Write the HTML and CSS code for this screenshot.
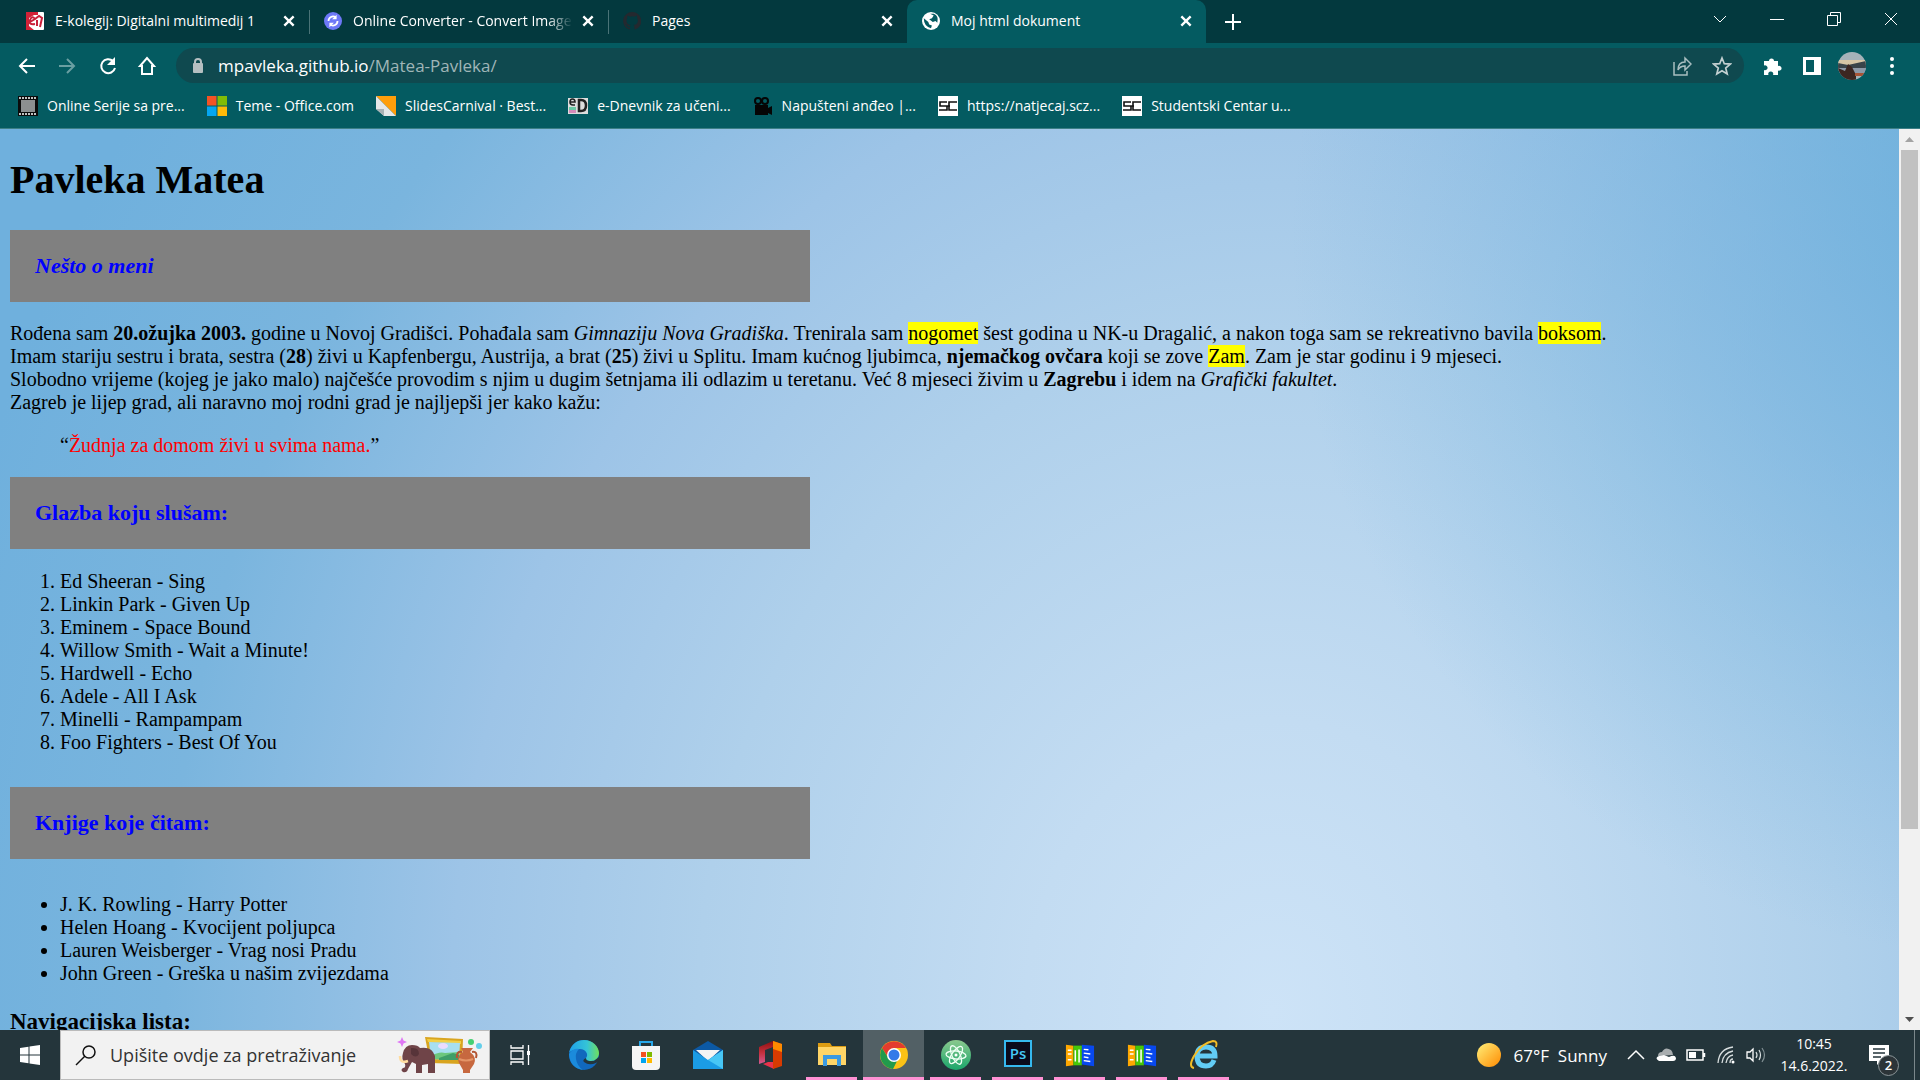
FILE: index.html
```html
<!DOCTYPE html>
<html lang="hr">
<head>
<meta charset="utf-8">
<title>Moj html dokument</title>
<link rel="stylesheet" href="styles.css">
</head>
<body>
<svg class="defs" aria-hidden="true">
  <symbol id="close" viewBox="0 0 12 12"><path d="M2 2l8 8M10 2l-8 8" stroke="#fff" stroke-width="2"/></symbol>
  <symbol id="sc" viewBox="0 0 20 20"><path fill="#fff" d="M0 0h20v20H0z"/><path d="M9 6H2v4h7v4H1M19 6h-8v8h8M9 10h3" fill="none" stroke="#111" stroke-width="1.600"/></symbol>
  <symbol id="lib" viewBox="0 0 30 32"><path fill="#ffa800" d="M0 5l8 1v21l-8 1z"/><path fill="#46c808" d="M8 6l9 0v21l-9 0z"/><path fill="#0848ee" d="M17 5l13 1v22l-13-2z"/><path d="M2 11h4M2 15h4M2 21h4M10 11v12M14 10v14M19 10l5 .5M19 14l7 1M19 18l5 1M19 22l7 1" stroke="#fff" stroke-width="1.600"/></symbol>
</svg>

<header class="browser">
  <nav class="tabs" aria-label="Kartice">
    <div class="tab first">
      <svg class="fav" viewBox="0 0 18 18"><rect width="18" height="18" rx="1" fill="#fff"/><path d="M0 0h12v3H8L3 6v8l5 4H0z" fill="#d32238"/><path d="M4 10l5-3q-3-4-5 1t5 4M9 7l4-3 3 2-2 9M11 8v6" fill="none" stroke="#c9203a" stroke-width="2"/></svg>
      <a href="#">E-kolegij: Digitalni multimedij 1</a>
      <button aria-label="Zatvori"><svg><use href="#close"/></svg></button>
    </div>
    <div class="tab">
      <svg class="fav" viewBox="0 0 20 20"><circle cx="10" cy="10" r="10" fill="#6d78f7"/><path d="M5 10a5 5 0 0 1 8-4M15 10a5 5 0 0 1-8 4" fill="none" stroke="#fff" stroke-width="2"/><path d="M14 3v5H9zM6 17v-5h5z" fill="#fff"/></svg>
      <a class="fade" href="#">Online Converter - Convert Image</a>
      <button aria-label="Zatvori"><svg><use href="#close"/></svg></button>
    </div>
    <div class="tab">
      <svg class="fav" viewBox="0 0 20 20"><path fill="#24292f" d="M10 0a10 10 0 0 0-3 19.500c.5.100.7-.2.700-.5v-1.800c-2.700.6-3.300-1.200-3.300-1.200-.5-1.200-1.100-1.500-1.100-1.500-.9-.6.100-.6.100-.6 1 .1 1.500 1 1.500 1 .9 1.600 2.400 1.100 2.900.9.100-.7.400-1.100.6-1.400-2.200-.2-4.500-1.100-4.500-4.900 0-1.100.4-2 1-2.700-.1-.2-.4-1.300.1-2.600 0 0 .8-.3 2.700 1a9 9 0 0 1 5 0c1.900-1.300 2.700-1 2.700-1 .5 1.300.2 2.400.1 2.600.6.700 1 1.600 1 2.700 0 3.800-2.300 4.700-4.500 4.900.4.300.7.900.7 1.900V19c0 .3.200.6.700.5A10 10 0 0 0 10 0"/></svg>
      <a href="#">Pages</a>
      <button aria-label="Zatvori"><svg><use href="#close"/></svg></button>
    </div>
    <div class="tab active">
      <svg class="fav" viewBox="0 0 20 20"><circle cx="10" cy="10" r="10" fill="#fff"/><path d="M2 7l5 4 1 3 3 1-1 3q-8-2-8-11M9 2l4 2-2 3-3 1 4 3 3-1 2 2q2-8-4-10z" fill="#045b61"/></svg>
      <a href="#">Moj html dokument</a>
      <button aria-label="Zatvori"><svg><use href="#close"/></svg></button>
    </div>
    <button class="newtab" aria-label="Nova kartica"><svg viewBox="0 0 16 16"><path d="M8 0v16M0 8h16" stroke="#fff" stroke-width="2"/></svg></button>
    <div class="winctl">
      <button aria-label="Pretraži kartice"><svg viewBox="0 0 14 14"><path d="M1 4l6 6 6-6"/></svg></button>
      <button aria-label="Minimiziraj"><svg viewBox="0 0 14 14"><path d="M0 7.500h14"/></svg></button>
      <button aria-label="Vrati"><svg viewBox="0 0 14 14"><path d="M.5 3.500h10v10H.5zM3.500 3V.5h10v10H11"/></svg></button>
      <button aria-label="Zatvori prozor"><svg viewBox="0 0 14 14"><path d="M1 1l12 12M13 1L1 13"/></svg></button>
    </div>
  </nav>

  <div class="toolbar">
    <button aria-label="Natrag"><svg viewBox="0 0 20 20"><path d="M18 10H3M10 3l-7 7 7 7" fill="none" stroke="#fff" stroke-width="2"/></svg></button>
    <button aria-label="Naprijed"><svg viewBox="0 0 20 20"><path d="M2 10h15M10 3l7 7-7 7" fill="none" stroke="#6a9fa2" stroke-width="2"/></svg></button>
    <button aria-label="Osvježi"><svg viewBox="0 0 20 20"><path d="M16 5a7 7 0 1 0 2 7" fill="none" stroke="#fff" stroke-width="2"/><path d="M18 1v8h-8z" fill="#fff"/></svg></button>
    <button aria-label="Početna"><svg viewBox="0 0 20 20"><path d="M5 18V10H3l7-8 7 8h-2v8z" fill="none" stroke="#fff" stroke-width="2"/></svg></button>
    <div class="omnibox">
      <svg class="lock" viewBox="0 0 12 16"><rect x="1" y="5" width="10" height="10" rx="1" fill="#b5bfc1"/><path d="M3 6V4a3 3 0 0 1 6 0v2" fill="none" stroke="#b5bfc1" stroke-width="2"/></svg>
      <a class="url" href="#">mpavleka.github.io<span>/Matea-Pavleka/</span></a>
      <button aria-label="Dijeli"><svg viewBox="0 0 20 20"><path d="M2 6v13h13v-4M6 14q0-8 7-8V2l6 6-6 6v-4q-5 0-7 4z" fill="none" stroke="#a9bec0" stroke-width="1.500"/></svg></button>
      <button aria-label="Oznaka"><svg viewBox="0 0 20 20"><path d="M10 2l2.300 5.700 6 .4-4.600 3.900 1.500 6L10 14.800 4.800 18l1.500-6-4.600-3.900 6-.4z" fill="none" stroke="#c3d0d1" stroke-width="1.700"/></svg></button>
    </div>
    <button aria-label="Proširenja"><svg viewBox="0 0 20 20"><path d="M2 5h5a2.500 2.500 0 1 1 5 0h4v5a2.500 2.500 0 1 1 0 4.500V19h-5a2.500 2.500 0 1 0-4.500 0H2v-5a2.500 2.500 0 1 0 0-4.500z" fill="#fff"/></svg></button>
    <button aria-label="Bočna ploča"><svg viewBox="0 0 20 20"><path d="M1 1h18v18H1z" fill="#fff"/><path d="M4 4h8v12H4z" fill="#045b61"/></svg></button>
    <button class="avatar" aria-label="Profil"><svg viewBox="0 0 28 28"><defs><clipPath id="av"><circle cx="14" cy="14" r="14"/></clipPath></defs><g clip-path="url(#av)"><path fill="#a5b2b9" d="M0 0h28v28H0z"/><path fill="#d6c6a6" d="M0 8h28v5H0z"/><path fill="#39444a" d="M0 11l10 2 18-4v7H0z"/><path fill="#8d99a8" d="M0 16h28v6H0z"/><path fill="#3c2621" d="M0 16l7 3 3-7 4 3 4 8v5H0z"/><path fill="#a85335" d="M17 21h11v3H17z"/></g></svg></button>
    <button aria-label="Izbornik"><svg viewBox="0 0 20 20" fill="#fff"><circle cx="10" cy="3" r="2"/><circle cx="10" cy="10" r="2"/><circle cx="10" cy="17" r="2"/></svg></button>
  </div>

  <nav class="bookmarks" aria-label="Oznake">
    <a href="#"><svg viewBox="0 0 20 20"><path fill="#0b0b0b" d="M0 0h20v20H0z"/><path fill="#8c8f90" d="M3 4h14v12H3z"/><path d="M1 2h18M1 18h18" stroke="#fff" stroke-width="1.500" stroke-dasharray="2 1"/></svg>Online Serije sa pre...</a>
    <a href="#"><svg viewBox="0 0 20 20"><path fill="#f35325" d="M0 0h9.500v9.500H0z"/><path fill="#81bc06" d="M10.500 0H20v9.500h-9.500z"/><path fill="#05a6f0" d="M0 10.500h9.500V20H0z"/><path fill="#ffba08" d="M10.500 10.500H20V20h-9.500z"/></svg>Teme - Office.com</a>
    <a href="#"><svg viewBox="0 0 20 20"><path fill="#ff9e0b" d="M0 0h20v20z"/><path fill="#e5e7e8" d="M0 0l20 20H8L0 13z"/><path fill="#a9b2b5" d="M8 20v-7H0z"/></svg>SlidesCarnival · Best...</a>
    <a href="#"><svg viewBox="0 0 20 20"><path fill="#ddd" d="M0 2h20v16H0z"/><path d="M2 6h5q0-3-2.500-3T2 6t3 3h2" fill="none" stroke="#222" stroke-width="1.600"/><path fill="#69c9a5" d="M1 11h7v3H1z"/><path fill="#d58ab9" d="M1 14h7v3H1z"/><path d="M11 4v11h2q5 0 5-5.500T13 4z" fill="none" stroke="#222" stroke-width="2.500"/></svg>e-Dnevnik za učeni...</a>
    <a href="#"><svg viewBox="0 0 20 20"><g fill="none" stroke="#050505" stroke-width="2"><circle cx="5" cy="5" r="3"/><circle cx="12" cy="5" r="3"/></g><path d="M2 9h13v3l4-2v9l-4-2v2H2z" fill="#050505"/></svg>Napušteni anđeo |...</a>
    <a href="#"><svg><use href="#sc"/></svg>https://natjecaj.scz...</a>
    <a href="#"><svg><use href="#sc"/></svg>Studentski Centar u...</a>
  </nav>
</header>

<div class="view">
  <main class="page">
    <h1>Pavleka Matea</h1>
    <h2 class="box"><em>Nešto o meni</em></h2>
    <p>Rođena sam <b>20.ožujka 2003.</b> godine u Novoj Gradišci. Pohađala sam <i>Gimnaziju Nova Gradiška</i>. Trenirala sam <mark>nogomet</mark> šest godina u NK-u Dragalić, a nakon toga sam se rekreativno bavila <mark>boksom</mark>.<br>
    Imam stariju sestru i brata, sestra (<b>28</b>) živi u Kapfenbergu, Austrija, a brat (<b>25</b>) živi u Splitu. Imam kućnog ljubimca, <b>njemačkog ovčara</b> koji se zove <mark>Zam</mark>. Zam je star godinu i 9 mjeseci.<br>
    Slobodno vrijeme (kojeg je jako malo) najčešće provodim s njim u dugim šetnjama ili odlazim u teretanu. Već 8 mjeseci živim u <b>Zagrebu</b> i idem na <i>Grafički fakultet</i>.<br>
    Zagreb je lijep grad, ali naravno moj rodni grad je najljepši jer kako kažu:</p>
    <blockquote>“<span>Žudnja za domom živi u svima nama.</span>”</blockquote>
    <h2 class="box">Glazba koju slušam:</h2>
    <ol>
      <li>Ed Sheeran - Sing</li>
      <li>Linkin Park - Given Up</li>
      <li>Eminem - Space Bound</li>
      <li>Willow Smith - Wait a Minute!</li>
      <li>Hardwell - Echo</li>
      <li>Adele - All I Ask</li>
      <li>Minelli - Rampampam</li>
      <li>Foo Fighters - Best Of You</li>
    </ol>
    <h2 class="box books">Knjige koje čitam:</h2>
    <ul>
      <li>J. K. Rowling - Harry Potter</li>
      <li>Helen Hoang - Kvocijent poljupca</li>
      <li>Lauren Weisberger - Vrag nosi Pradu</li>
      <li>John Green - Greška u našim zvijezdama</li>
    </ul>
    <h3>Navigacijska lista:</h3>
  </main>
  <div class="scroll">
    <svg viewBox="0 0 21 21"><path d="M6 13h9l-4.500-5z" fill="#a3a3a3"/></svg>
    <div class="track"><div class="thumb"></div></div>
    <svg viewBox="0 0 21 21"><path d="M6 8h9l-4.500 5z" fill="#505050"/></svg>
  </div>
</div>

<footer class="taskbar">
  <button class="start" aria-label="Start"><svg viewBox="0 0 20 20"><path fill="#fff" d="M0 3l8.500-1.200v7.700H0zM9.500 1.600L20 0v9.500H9.500zM0 10.500h8.500v7.700L0 17zM9.500 10.500H20V20L9.500 18.400z"/></svg></button>
  <label class="search">
    <svg class="glass" viewBox="0 0 22 22"><circle cx="14" cy="8" r="6" fill="none" stroke="#111" stroke-width="1.500"/><path d="M10 12l-9 9" stroke="#111" stroke-width="1.500"/></svg>
    <input type="text" placeholder="Upišite ovdje za pretraživanje" aria-label="Pretraživanje">
    <svg class="art" viewBox="0 0 86 38"><path fill="#d9a520" d="M28 1l38 2-1 25-32-1z"/><path fill="#f2cf45" d="M30 3l34 2v3L31 6z"/><path fill="#a7dff0" d="M32 6l31 1-1 17-28-1z"/><path fill="#6cc77d" d="M33 20q10-5 15-3l14-1v8l-28-1z"/><path fill="#3f9e68" d="M42 22l14-5 6 2v5H42z"/><ellipse cx="46" cy="10" rx="5" ry="3" fill="#eadcff"/><path d="M5 1l1.500 3.500L10 6 6.500 7.500 5 11 3.500 7.500 0 6l3.500-1.500z" fill="#df78f5"/><circle cx="74" cy="6" r="3" fill="#45cf72"/><circle cx="82" cy="10" r="3" fill="#64cfea"/><path fill="#6f4448" d="M6 17q2-8 9-8 6 0 8 3 12-2 15 8v17h-7v-9l-6 1v8h-6v-9l-4-2-4 7q-1 4-5 3-3-2 0-4 3 0 2-4-4-5-2-11"/><path d="M14 12q8-1 8 6-3 5-8 0" fill="#573439"/><path d="M3 20q0 8 8 5" fill="none" stroke="#ffdc9e" stroke-width="2.500"/><path fill="#c7683f" d="M64 12h12l-3 4q7 5 4 12l-4 6v3h-7v-3l-4-7q-3-7 4-11z"/><path d="M65 16q-6-1-5 6M75 16q6-1 4 6" fill="none" stroke="#b35634" stroke-width="2"/><path d="M62 23q7 3 14 0" fill="none" stroke="#e49467" stroke-width="2"/></svg>
  </label>
  <button class="taskview" aria-label="Prikaz zadataka"><svg viewBox="0 0 20 20"><path d="M1 0v3h12V0M1 20v-3h12v3M1 6h12v8H1zM18.500 0v20" fill="none" stroke="#fff" stroke-width="1.300"/><path fill="#fff" d="M17 6h3v4h-3z"/></svg></button>
  <nav class="apps" aria-label="Programi">
    <button aria-label="Edge"><svg viewBox="0 0 30 30"><defs><linearGradient id="eg"><stop stop-color="#1e9fe8"/><stop offset=".6" stop-color="#35c4d7"/><stop offset="1" stop-color="#70e05c"/></linearGradient></defs><circle cx="15" cy="15" r="15" fill="#1168bd"/><path fill="url(#eg)" d="M0 13C2 4 8 0 15 0c9 0 15 7 15 13 0 5-4 8-8 8-5 0-6-2-5-3 3-3 0-9-6-9C6 9 1 11 0 13"/><path fill="#1b8bdc" d="M0 14q4-6 10-5-4 4-3 10 1 7 7 11Q1 28 0 14"/><path fill="#24353b" d="M17 18q-4 2-2 4 5 4 12 1l3-2v-4l-5 4-4 0q-4 0-4-3"/></svg></button>
    <button aria-label="Store"><svg viewBox="0 0 30 30"><path d="M9 8V2h12v6" fill="none" stroke="#28a8ea" stroke-width="2"/><path d="M1 6h28v20q0 4-4 4H5q-4 0-4-4z" fill="#f5f5f5"/><path fill="#f25022" d="M10 12h5v5h-5z"/><path fill="#7fba00" d="M16 12h5v5h-5z"/><path fill="#00a4ef" d="M10 18h5v5h-5z"/><path fill="#ffb900" d="M16 18h5v5h-5z"/></svg></button>
    <button aria-label="Mail"><svg viewBox="0 0 30 30"><path fill="#0c59a4" d="M0 10L15 1l15 9v10H0z"/><path fill="#f4f4f4" d="M3 10h24L15 21z"/><path fill="#1b9ce5" d="M0 10l15 10 15-10v19H0z"/><path fill="#47c6f5" d="M30 10v19L15 20z"/></svg></button>
    <button aria-label="Office"><svg viewBox="0 0 30 30"><defs><linearGradient id="of" x2="0" y2="1"><stop stop-color="#8e1010"/><stop offset=".5" stop-color="#c4303d"/><stop offset="1" stop-color="#d45a92"/></linearGradient></defs><path fill="url(#of)" d="M4 7L18 1v6l-8 3v12l-6 2z"/><path fill="#e8324b" d="M8 24l5-2h6v7z"/><path fill="#d83b01" d="M18 1l9 3v22l-9 3z"/><path fill="#ff8a00" d="M18 1l9 3v8l-9-3z"/></svg></button>
    <button class="open" aria-label="Explorer"><svg viewBox="0 0 30 30"><path fill="#dc9c13" d="M1 3h12l2 3h14v4H1z"/><path fill="#ffd567" d="M1 7h28v18H1z"/><path fill="#3b9ae1" d="M6 15h18v11h-4v-7h-10v7H6z"/></svg></button>
    <button class="open current" aria-label="Chrome"><svg viewBox="0 0 30 30"><circle cx="15" cy="15" r="14" fill="#fbc116"/><path fill="#e33b2e" d="M3 8a14 14 0 0 1 24 0H15l-6 9z"/><path fill="#229a4c" d="M3 8l7 11h9l-5 10A14 14 0 0 1 3 8"/><circle cx="15" cy="15" r="7" fill="#fff"/><circle cx="15" cy="15" r="5.500" fill="#337ae8"/></svg></button>
    <button class="open" aria-label="Atom"><svg viewBox="0 0 30 30"><defs><linearGradient id="at" x2="0" y2="1"><stop stop-color="#8bc98e"/><stop offset="1" stop-color="#1aa66b"/></linearGradient></defs><circle cx="15" cy="15" r="15" fill="url(#at)"/><g fill="none" stroke="#effff5" stroke-width="1.300"><ellipse cx="15" cy="15" rx="4" ry="10" transform="rotate(-25 15 15)"/><ellipse cx="15" cy="15" rx="4" ry="10" transform="rotate(35 15 15)"/><ellipse cx="15" cy="15" rx="4" ry="10" transform="rotate(95 15 15)"/></g><circle cx="15" cy="15" r="1.500" fill="#fff"/></svg></button>
    <button class="open" aria-label="Photoshop"><svg viewBox="0 0 30 30"><path d="M2 1h26v25H2z" fill="#0b0b1c" stroke="#36b9ef" stroke-width="2"/><text x="15" y="19" text-anchor="middle" class="ps">Ps</text></svg></button>
    <button class="open" aria-label="Knjižnica"><svg><use href="#lib"/></svg></button>
    <button class="open" aria-label="Knjižnica 2"><svg><use href="#lib"/></svg></button>
    <button class="open" aria-label="Internet Explorer"><svg viewBox="0 0 30 30"><path d="M25 20q-2 6-8 6-9 0-9-10 0-9 9-9t9 9H10" fill="none" stroke="#62ccf5" stroke-width="5"/><path d="M5 28q-6-1 0-12Q13 3 24 1q5 0 3 6" fill="none" stroke="#f3bd26" stroke-width="2"/></svg></button>
  </nav>
  <div class="tray">
    <svg class="sun" viewBox="0 0 24 24"><defs><linearGradient id="sn" x2="1" y2="1"><stop offset=".1" stop-color="#ffe66e"/><stop offset="1" stop-color="#ff8a00"/></linearGradient></defs><circle cx="12" cy="12" r="12" fill="url(#sn)"/></svg>
    <span class="weather">67°F&nbsp; Sunny</span>
    <svg class="ti" viewBox="0 0 20 20"><path d="M2 14l8-8 8 8" fill="none" stroke="#fff" stroke-width="1.500"/></svg>
    <svg class="ti" viewBox="0 0 20 20"><path d="M2 11q0-4 4-4 3-6 9-2 2 2 2 5" fill="#a9aeb0"/><path d="M3 16q-5-3 0-5l5-1 5 2q6-3 7 1 0 3-3 3z" fill="#fff"/></svg>
    <svg class="ti" viewBox="0 0 20 20"><path d="M1 5h16v10H1zM18.500 8v4" fill="none" stroke="#fff" stroke-width="1.500"/><path fill="#fff" d="M3 7h7v6H3z"/></svg>
    <svg class="ti" viewBox="0 0 20 20"><path d="M6 18Q7 8 17 6M10 18q1-7 7-8M14 18q0-4 3-4M2 18Q3 4 17 2" fill="none" stroke="#d8dedf" stroke-width="1.300"/><circle cx="17" cy="17" r="1.500" fill="#fff"/></svg>
    <svg class="ti" viewBox="0 0 20 20"><path d="M1 7h3l3-3v12l-3-3H1z" fill="none" stroke="#fff" stroke-width="1.300"/><path d="M10 7q2 3 0 6M13 5q3 5 0 10" fill="none" stroke="#dce2e3" stroke-width="1.200"/><path d="M16 3q5 7 0 14" fill="none" stroke="#829094" stroke-width="1.200"/></svg>
    <div class="clock"><span>10:45</span><span>14.6.2022.</span></div>
    <button class="notes" aria-label="Obavijesti"><svg viewBox="0 0 20 20"><path fill="#fff" d="M0 0h20v16h-8l-4 4v-4H0z"/><path d="M4 4h12M4 8h12M4 12h8" stroke="#24353b" stroke-width="1.300"/></svg><span>2</span></button>
  </div>
</footer>
</body>
</html>
```
FILE: styles.css
```css
* { box-sizing: border-box; }
body {
  margin: 0;
  height: 100vh;
  display: flex;
  flex-direction: column;
  overflow: hidden;
  font-family: "Open Sans", "Noto Sans", sans-serif;
  font-size: 14px;
  color: #fff;
}
button { background: none; border: 0; padding: 0; color: inherit; font: inherit; display: flex; align-items: center; justify-content: center; }
a { color: inherit; text-decoration: none; }
svg { display: block; flex: none; }
.defs { position: absolute; width: 0; height: 0; }

/* Browser chrome */
.browser { flex: none; background: #045b61; border-bottom: 1px solid #3c7f86; }
.tabs { display: flex; height: 43px; background: #03393e; }
.tab { display: flex; align-items: center; flex: 0 1 299px; min-width: 0; padding: 0 13px 2px 15px; position: relative; }
.tab.first { flex-basis: 309px; padding-left: 26px; }
.tab + .tab::before { content: ""; position: absolute; left: 0; top: 10px; width: 1px; height: 24px; background: #4a7377; }
.tab + .tab.active::before { display: none; }
.tab a { flex: 1; overflow: hidden; white-space: nowrap; }
.tab .fade { -webkit-mask-image: linear-gradient(90deg, #000 88%, transparent); mask-image: linear-gradient(90deg, #000 88%, transparent); }
.tab button svg { width: 14px; height: 14px; }
.tab button { padding: 0 0 0 8px; }
.fav { width: 18px; height: 18px; margin-right: 11px; }
.tab.active { background: #045b61; border-radius: 10px 10px 0 0; }
.newtab { width: 54px; }
.newtab svg { width: 16px; height: 16px; }
.winctl { margin-left: auto; padding-right: 1px; display: flex; }
.winctl button { width: 57px; padding-bottom: 6px; }
.winctl svg { width: 14px; height: 14px; fill: none; stroke: #fff; }
.toolbar { display: flex; align-items: center; height: 45px; padding: 0 8px 0 7px; }
.toolbar > button { width: 40px; height: 36px; }
.toolbar svg { width: 20px; height: 20px; }
.toolbar .avatar svg { width: 28px; height: 28px; }
.omnibox { flex: 1; display: flex; align-items: center; height: 35px; margin: 0 8px 0 9px; padding: 0 2px 0 16px; border-radius: 18px; background: #0f494f; font-size: 17px; }
.omnibox button { width: 40px; }
.omnibox .lock { width: 12px; height: 16px; margin-right: 14px; }
.url { flex: 1; }
.url span { color: #a0b6b8; }
.bookmarks { display: flex; gap: 22px; align-items: center; height: 40px; padding: 0 18px 5px; }
.bookmarks a { display: flex; gap: 9px; align-items: center; white-space: nowrap; }
.bookmarks svg { width: 20px; height: 20px; }

/* Document */
.view { flex: 1; min-height: 0; display: flex; }
.page {
  flex: 1;
  overflow: hidden;
  padding: 28px 10px 0;
  background:
    radial-gradient(ellipse 38% 80% at 106% 12%, rgba(104, 174, 219, .8), rgba(104, 174, 219, 0)),
    radial-gradient(ellipse 72% 180% at 67% 98%, #cde3f7 0%, #c3dcf2 18%, #afd0eb 42%, #9dc4e7 60%, #7ab5de 81%, #6fb0dd 100%);
  color: #000;
  font: 20px/23px "Liberation Serif", "Times New Roman", serif;
}
h1 { margin: 0 0 27px; font-size: 40px; line-height: 46px; }
.box { max-width: 800px; margin: 0; padding: 25px; background: gray; color: #00f; font-size: 22px; line-height: 22px; }
p { margin: 20px 0; }
mark { background: #ff0; }
blockquote { margin: 20px 50px; }
blockquote span { color: #f00; }
ol, ul { margin: 21px 0; padding-left: 50px; }
.books { margin-top: 33px; }
ul { margin: 34px 0 23px; }
h3 { margin: 0; font-size: 23px; line-height: 28px; }
.scroll { width: 21px; display: flex; flex-direction: column; background: #f1f1f1; }
.scroll svg { width: 21px; height: 21px; }
.track { flex: 1; padding: 0 2px; }
.thumb { height: 79%; background: #c1c1c1; }

/* Taskbar */
.taskbar { flex: none; display: flex; height: 50px; background: #24353b; }
.start { width: 60px; }
.start svg { width: 20px; height: 20px; }
.search { width: 430px; display: flex; align-items: center; padding: 0 6px 0 14px; background: #f2f2f2; border: 1px solid #bbb; }
.glass { width: 22px; height: 22px; margin-right: 13px; }
.search input { flex: 1; min-width: 0; border: 0; padding: 0; background: none; outline: 0; font: 18px "Open Sans", sans-serif; }
.search input::placeholder { color: #333; opacity: 1; }
.art { width: 86px; height: 38px; }
.taskview { width: 60px; }
.taskview svg { width: 20px; height: 20px; }
.apps { display: flex; gap: 1px; padding-left: 3px; }
.apps button { width: 61px; position: relative; }
.apps svg { width: 30px; height: 30px; }
.open::after { content: ""; position: absolute; left: 5px; right: 5px; bottom: 0; height: 3px; background: #ff91d4; }
.current { background: #526065; }
.current::after { left: 0; right: 0; }
.ps { font: 600 15px "Open Sans", sans-serif; fill: #45c8f7; }
.tray { margin-left: auto; display: flex; align-items: center; margin-right: 5px; padding-right: 25px; border-right: 1px solid #7b878b; }
.sun { width: 24px; height: 24px; margin-right: 13px; }
.weather { font-size: 17px; margin-right: 19px; }
.ti { width: 20px; height: 20px; margin-right: 10px; }
.clock { width: 76px; text-align: center; line-height: 22px; display: flex; flex-direction: column; }
.notes { margin-left: 17px; position: relative; }
.notes svg { width: 20px; height: 20px; }
.notes span { position: absolute; left: 9px; top: 10px; width: 21px; height: 21px; border: 1px solid #8c9699; border-radius: 50%; background: #2c3438; font-size: 13px; font-weight: 600; line-height: 18px; text-align: center; }
```
